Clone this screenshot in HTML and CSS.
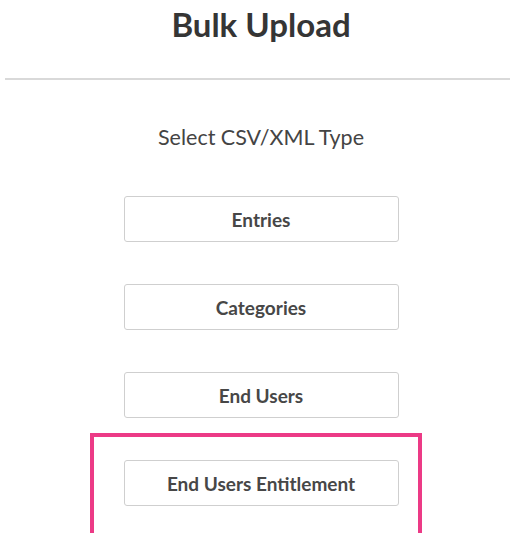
FILE: index.html
```html
<!DOCTYPE html>
<html lang="en">
<head>
<meta charset="utf-8">
<title>Bulk Upload</title>
<link rel="stylesheet" href="styles.css">
</head>
<body>
<div class="page">
  <header class="header">
    <h1 class="title">Bulk Upload</h1>
  </header>
  <main class="content">
    <p class="subtitle">Select CSV/XML Type</p>
    <div class="types">
      <button class="type-btn" type="button">Entries</button>
      <button class="type-btn" type="button">Categories</button>
      <button class="type-btn" type="button">End Users</button>
      <div class="highlight-wrap">
        <button class="type-btn" type="button">End Users Entitlement</button>
        <span class="highlight"></span>
      </div>
    </div>
  </main>
</div>
</body>
</html>
```
FILE: styles.css
```css
html, body {
  margin: 0;
  padding: 0;
  background: #fff;
}

body {
  font-family: Lato, "Open Sans", Arial, sans-serif;
  color: #333;
  height: 533px;
  overflow: hidden;
}

.page {
  margin-left: 5px;
  width: 512px;
  height: 533px;
  overflow: hidden;
}

.header {
  padding-top: 4px;
  padding-bottom: 34px;
  border-bottom: 2px solid #d9d9d9;
}

.title {
  margin: 0;
  text-align: center;
  font-size: 33px;
  line-height: 40px;
  font-weight: 700;
  color: #353535;
}

.content {
  display: flex;
  flex-direction: column;
  align-items: center;
  padding-top: 45px;
}

.subtitle {
  margin: 0;
  font-size: 21.5px;
  line-height: 25px;
  color: #444;
}

.types {
  margin-top: 46px;
  display: flex;
  flex-direction: column;
  gap: 42px;
}

.type-btn {
  display: block;
  width: 275px;
  height: 46px;
  padding: 0;
  background: #fff;
  border: 1px solid #cfcfcf;
  border-radius: 3px;
  font-family: inherit;
  font-size: 19px;
  font-weight: 700;
  color: #474747;
}

.highlight-wrap {
  position: relative;
}

.highlight {
  position: absolute;
  left: -34px;
  top: -27px;
  width: 324px;
  height: 120px;
  border: 4px solid #ec3a86;
  pointer-events: none;
}
```
